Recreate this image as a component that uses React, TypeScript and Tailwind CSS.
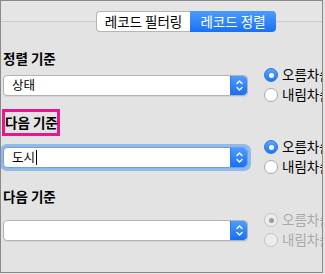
import React from "react";

const font = "font-['Noto_Sans_CJK_KR','Noto_Sans',sans-serif]";

function Stepper() {
  return (
    <div className="w-[17px] h-full rounded-r-[4px] bg-gradient-to-b from-[#4d9cfd] to-[#1a6ff1] flex items-center justify-center border-l border-[#2a7be9]">
      <svg width="9" height="13" viewBox="0 0 9 13" fill="none">
        <path d="M2 4.5 L4.5 2 L7 4.5" stroke="white" strokeWidth="1.4" strokeLinecap="round" strokeLinejoin="round" />
        <path d="M2 8.5 L4.5 11 L7 8.5" stroke="white" strokeWidth="1.4" strokeLinecap="round" strokeLinejoin="round" />
      </svg>
    </div>
  );
}

function Select({ value, focused }: { value?: string; focused?: boolean }) {
  return (
    <div
      className={
        "ml-[2px] w-[245px] shrink-0 h-[21px] flex bg-white rounded-[4px] border " +
        (focused
          ? "border-[#6f9fe0] shadow-[0_0_0_3px_#93b8ea]"
          : "border-[#b3b3b3] shadow-[0_1px_0_rgba(0,0,0,0.06)]")
      }
    >
      <div className="flex-1 flex items-center pl-[8px] text-[12.5px] leading-none text-black">
        {value}
        {focused && <span className="ml-[1px] w-[1px] h-[15px] bg-black" />}
      </div>
      <Stepper />
    </div>
  );
}

function Radio({ label, checked, disabled }: { label: string; checked?: boolean; disabled?: boolean }) {
  let circle = "";
  if (disabled) circle = "bg-[#ececec] border-[#c4c4c4]";
  else if (checked) circle = "bg-gradient-to-b from-[#5aa5fc] to-[#1f74f2] border-[#2a78e6]";
  else circle = "bg-white border-[#a9a9a9]";
  return (
    <div className="flex items-center h-[14px]">
      <div className={"w-[14px] h-[14px] rounded-full border flex items-center justify-center shrink-0 " + circle}>
        {checked && <div className={"w-[5px] h-[5px] rounded-full " + (disabled ? "bg-[#9d9d9d]" : "bg-white")} />}
      </div>
      <span
        className={
          "ml-[4px] text-[13.5px] leading-none whitespace-nowrap " +
          (disabled ? "text-[#a9a9a9]" : "text-black")
        }
      >
        {label}
      </span>
    </div>
  );
}

function Row({ value, focused, disabled, mt }: { value?: string; focused?: boolean; disabled?: boolean; mt: string }) {
  return (
    <div className={"flex items-center " + mt}>
      <Select value={value} focused={focused} />
      <div className="ml-[16px] shrink-0 flex flex-col gap-[6px]">
        <Radio label="오름차순" checked disabled={disabled} />
        <Radio label="내림차순" disabled={disabled} />
      </div>
    </div>
  );
}

export default function App() {
  return (
    <div className={"w-[325px] h-[274px] bg-[#e3e3e3] " + font}>
      <div className="w-[323px] h-[273px] border border-[#8a8a8a] overflow-hidden bg-[#e3e3e3]">
        <div className="h-[21px] border-b border-[#cbcbcb] bg-[#e5e5e5]" />
        <div className="-mt-[11px] ml-[95px] flex h-[21px] w-[180px] text-[13.5px]">
          <div className="w-[94px] bg-white border border-r-0 border-[#b5b5b5] rounded-l-[4px] flex items-center justify-center text-black">
            레코드 필터링
          </div>
          <div className="flex-1 rounded-r-[4px] bg-gradient-to-b from-[#4b9bfd] to-[#1b70f2] flex items-center justify-center text-white">
            레코드 정렬
          </div>
        </div>

        <div className="mt-[18px] ml-[2px] h-[16px] leading-[16px] text-[13.5px] font-bold text-black whitespace-nowrap">
          정렬 기준
        </div>
        <Row value="상태" mt="mt-[2px]" />

        <div className="mt-[7px] ml-[1px] w-[58px] h-[27px] border-[3px] border-[#e6178c] pt-[2px]">
          <div className="h-[16px] leading-[16px] text-[13.5px] font-bold text-black whitespace-nowrap">다음 기준</div>
        </div>
        <Row value="도시" focused mt="mt-[4px]" />

        <div className="mt-[14px] ml-[2px] h-[16px] leading-[16px] text-[13.5px] font-bold text-black whitespace-nowrap">
          다음 기준
        </div>
        <Row disabled mt="mt-[9px]" />
      </div>
    </div>
  );
}
